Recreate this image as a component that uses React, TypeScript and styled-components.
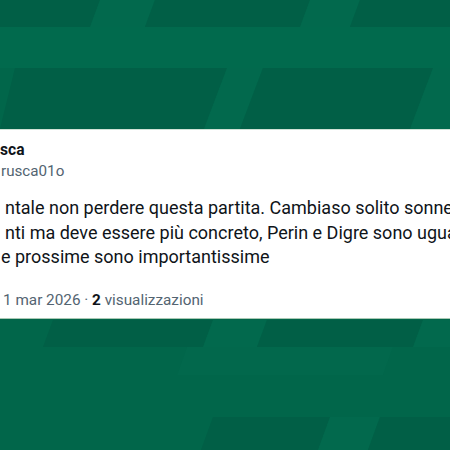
import styled, { createGlobalStyle } from 'styled-components'

const DARK = '#015f46'
const LIGHT = '#02694d'
const BASE = '#01664a'

// slanted stripes of the backdrop, [points, colour]
const shapes: [string, string][] = [
  ['0,0 100,0 90,27 0,27', DARK],
  ['100,0 155,0 145,27 90,27', LIGHT],
  ['155,0 310,0 300,27 145,27', DARK],
  ['310,0 360,0 350,27 300,27', LIGHT],
  ['360,0 450,0 450,27 350,27', DARK],
  ['0,27 450,27 450,68 0,68', '#016a4d'],
  ['15,68 227,68 204,129 0,129', DARK],
  ['227,68 263,68 240,129 204,129', LIGHT],
  ['263,68 433,68 410,129 240,129', DARK],
  ['433,68 450,68 450,129 410,129', LIGHT],
  ['53,320 213,320 203,347 43,347', DARK],
  ['213,320 267,320 257,347 203,347', LIGHT],
  ['267,320 423,320 413,347 257,347', DARK],
  ['423,320 450,320 450,347 413,347', LIGHT],
  ['187,347 393,347 383,375 177,375', '#02684c'],
  ['213,417 330,417 318,450 201,450', DARK],
  ['330,417 380,417 368,450 318,450', LIGHT],
  ['380,417 450,417 450,450 368,450', DARK],
]

const stripes = `<svg xmlns='http://www.w3.org/2000/svg' width='450' height='450'>${shapes
  .map(([p, c]) => `<polygon points='${p}' fill='${c}'/>`)
  .join('')}</svg>`

const GlobalStyle = createGlobalStyle`
  body {
    margin: 0;
    overflow: hidden;
  }
`

const Page = styled.div`
  width: 450px;
  height: 450px;
  box-sizing: border-box;
  padding-top: 129px;
  overflow: hidden;
  background: ${BASE} url("data:image/svg+xml,${encodeURIComponent(stripes)}") no-repeat;
  font-family: Roboto, "Liberation Sans", sans-serif;
`

const Card = styled.div`
  height: 190px;
  box-sizing: border-box;
  padding: 10px 0 10px;
  background: #fff;
  border-top: 1px solid #cfe2d6;
  border-bottom: 1px solid #a9c9b4;
  overflow: hidden;
`

const Line = styled.div<{ $indent?: number }>`
  white-space: nowrap;
  padding-left: ${(p) => p.$indent ?? 0}px;
`

const Name = styled(Line)`
  font-size: 15.6px;
  line-height: 21px;
  font-weight: 700;
  color: #0f1419;
`

const Handle = styled(Line)`
  font-size: 15.2px;
  line-height: 21px;
  color: #536471;
`

const Body = styled.div`
  margin-top: 14px;
  font-size: 18px;
  line-height: 24.5px;
  color: #0f1419;
`

const Meta = styled(Line)`
  margin-top: 20px;
  font-size: 15.3px;
  line-height: 20px;
  color: #536471;

  b {
    font-weight: 700;
    color: #0f1419;
  }
`

export default function App() {
  return (
    <Page>
      <GlobalStyle />
      <Card>
        <Name>sca</Name>
        <Handle $indent={1}>rusca01o</Handle>
        <Body>
          <Line $indent={5}>ntale non perdere questa partita. Cambiaso solito sonnecchiante</Line>
          <Line $indent={5}>nti ma deve essere più concreto, Perin e Digre sono uguali</Line>
          <Line $indent={1}>e prossime sono importantissime</Line>
        </Body>
        <Meta $indent={3}>
          1 mar 2026 · <b>2</b> visualizzazioni
        </Meta>
      </Card>
    </Page>
  )
}
